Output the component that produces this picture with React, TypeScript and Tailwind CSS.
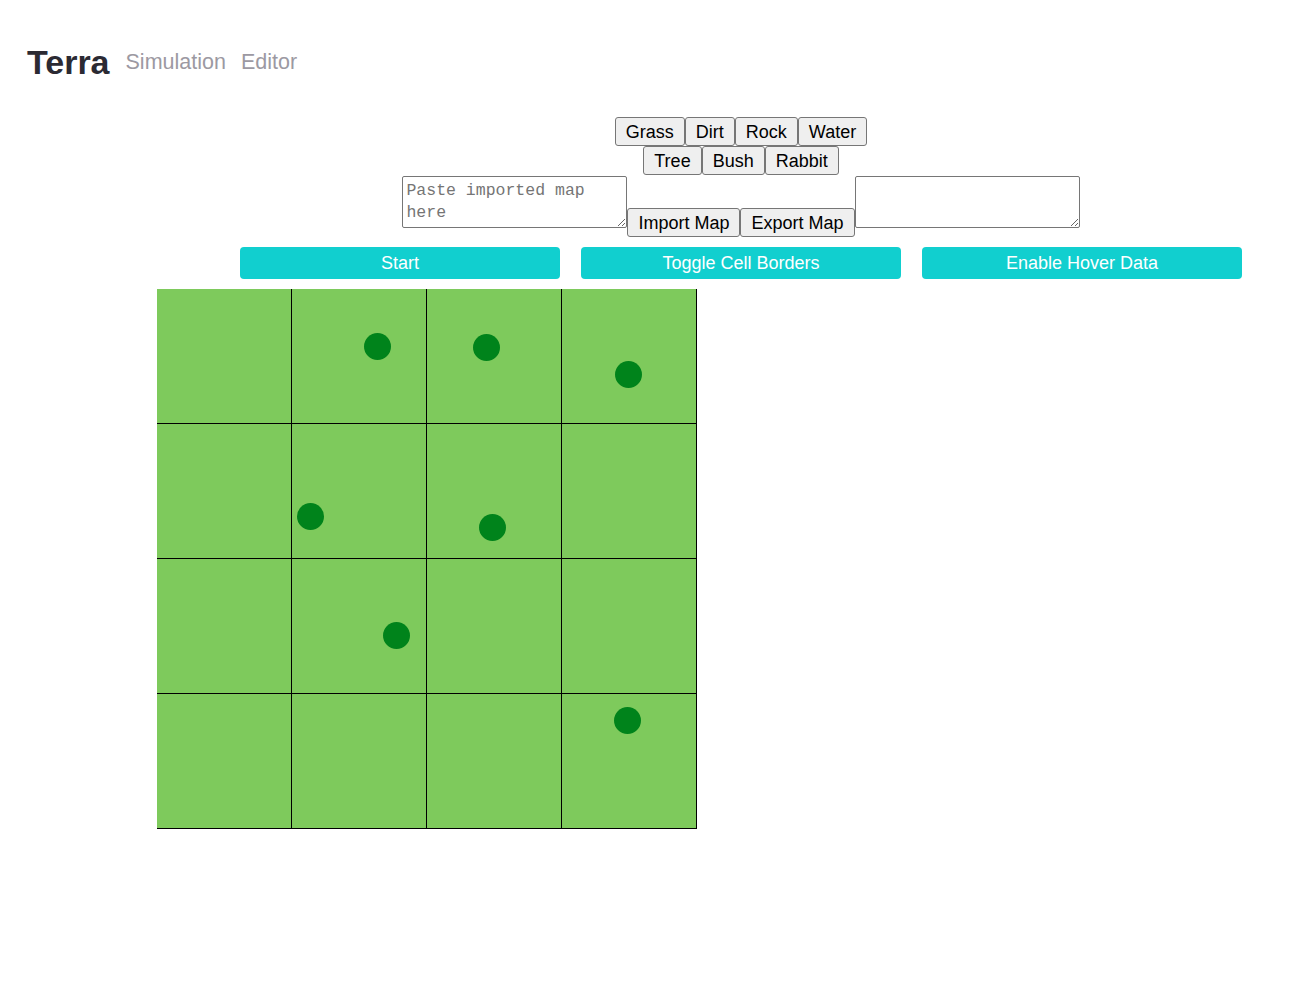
import React from 'react';

type Dot = { cell: number; pos: string };

const dots: Dot[] = [
  { cell: 1, pos: 'left-[72px] top-[44px]' },
  { cell: 2, pos: 'left-[46px] top-[45px]' },
  { cell: 3, pos: 'left-[53px] top-[72px]' },
  { cell: 5, pos: 'left-[5px] top-[79px]' },
  { cell: 6, pos: 'left-[52px] top-[90px]' },
  { cell: 9, pos: 'left-[91px] top-[63px]' },
  { cell: 15, pos: 'left-[52px] top-[13px]' },
];

const tileBtn =
  'bg-[#efefef] border border-[#767676] rounded-[3px] px-[10px] h-[29px] text-[18px] leading-none text-black';

const actionBtn =
  'w-[320px] h-[32px] bg-[#11cfcf] rounded-[4px] text-white text-[18px] leading-none';

export default function App() {
  return (
    <div className="min-h-[988px] bg-white font-['Liberation_Sans',Arial,sans-serif]">
      <header className="flex items-end pl-[27px] pt-[45px]">
        <h1 className="text-[34px] font-bold text-[#2b2a33] leading-none mr-[16px]">Terra</h1>
        <span className="text-[21.5px] text-[#9c99a2] leading-none mr-[15px] mb-[6px]">Simulation</span>
        <span className="text-[21.5px] text-[#9c99a2] leading-none mb-[6px]">Editor</span>
      </header>

      <div className="pl-[168px] mt-[38px] flex flex-col items-center">
        <div className="flex">
          {['Grass', 'Dirt', 'Rock', 'Water'].map((t) => (
            <button key={t} type="button" className={tileBtn}>{t}</button>
          ))}
        </div>
        <div className="flex">
          {['Tree', 'Bush', 'Rabbit'].map((t) => (
            <button key={t} type="button" className={tileBtn}>{t}</button>
          ))}
        </div>
        <div className="flex mt-px">
          <textarea
            placeholder="Paste imported map here"
            className="w-[225px] h-[52px] border border-[#767676] rounded-[2px] pl-[3px] pt-[3px] font-['Liberation_Mono',monospace] text-[16.5px] leading-[22px] placeholder:text-[#757575]"
          />
          <div className="flex mt-[32px] h-[29px]">
            <button type="button" className={tileBtn}>Import Map</button>
            <button type="button" className={tileBtn}>Export Map</button>
          </div>
          <textarea className="w-[225px] h-[52px] border border-[#767676] rounded-[2px] px-[3px] py-[2px] font-['Liberation_Mono',monospace] text-[16px]" />
        </div>
        <div className="flex gap-[21px] mt-[10px]">
          <button type="button" className={actionBtn}>Start</button>
          <button type="button" className={actionBtn}>Toggle Cell Borders</button>
          <button type="button" className={actionBtn}>Enable Hover Data</button>
        </div>
      </div>

      <div className="ml-[157px] mt-[10px] grid grid-cols-[repeat(4,135px)] w-[540px]">
        {Array.from({ length: 16 }, (_, i) => (
          <div key={i} className="relative h-[135px] bg-[#7eca5c] border-r border-b border-black">
            {dots
              .filter((d) => d.cell === i)
              .map((d, j) => (
                <div key={j} className={`absolute w-[27px] h-[27px] rounded-full bg-[#00831b] ${d.pos}`} />
              ))}
          </div>
        ))}
      </div>
    </div>
  );
}
